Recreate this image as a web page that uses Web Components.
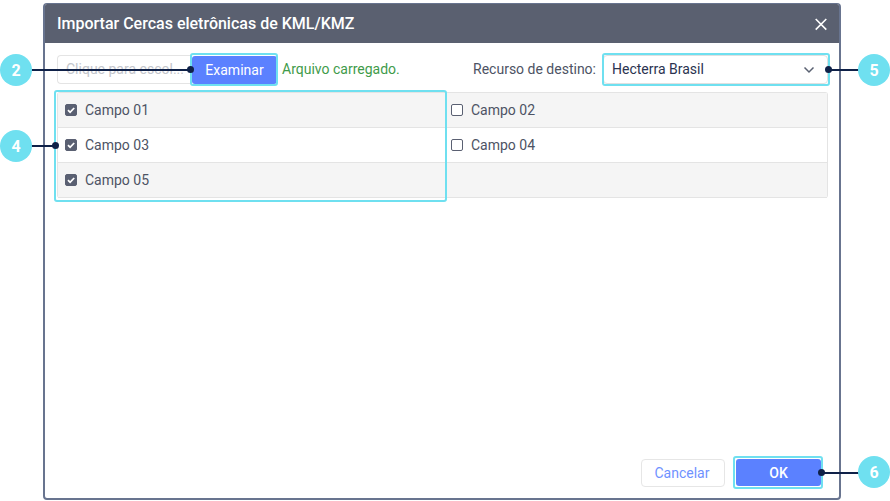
<!DOCTYPE html>
<html>
<head>
<meta charset="utf-8">
<style>
  html, body { margin: 0; background: #fff; }
  body { font-family: Roboto, "Liberation Sans", sans-serif; }
</style>
</head>
<body>
<import-dialog></import-dialog>
<script>
const ICONS = {
  close: '<svg width="14" height="14" viewBox="0 0 14 14"><path d="M1.7 2l10.6 10.6M12.3 2L1.7 12.6" stroke="#fff" stroke-width="1.6" fill="none"/></svg>',
  chevron: '<svg width="12" height="8" viewBox="0 0 12 8"><path d="M1.5 1.5L6 6l4.5-4.5" stroke="#5a6172" stroke-width="1.5" fill="none"/></svg>',
  check: '<svg width="10" height="10" viewBox="0 0 10 10"><path d="M2 5.2l2.1 2.1L8.2 3" stroke="#fff" stroke-width="1.8" fill="none"/></svg>'
};

customElements.define('check-row', class extends HTMLElement {
  constructor() {
    super();
    const on = this.hasAttribute('checked');
    this.attachShadow({ mode: 'open' }).innerHTML = `
      <style>
        :host { display: flex; align-items: center; height: 35px; padding-left: 7px; box-sizing: border-box;
                font-size: 14px; color: #4d5364; gap: 8px; }
        .box { width: 12px; height: 12px; border: 1px solid #5a6072; border-radius: 2px; background: #fff; box-sizing: border-box;
               display: flex; align-items: center; justify-content: center; }
        :host([checked]) .box { background: #5a6072; }
        svg { display: block; }
      </style>
      <span class="box">${on ? ICONS.check : ''}</span><slot></slot>`;
  }
});

customElements.define('import-dialog', class extends HTMLElement {
  constructor() {
    super();
    this.attachShadow({ mode: 'open' }).innerHTML = `
      <style>
        :host { display: block; position: relative; width: 890px; height: 501px; overflow: hidden; padding: 3px 49px 1px 43px; box-sizing: border-box; }
        .dialog { height: 100%; border: 2px solid #68748f; border-top-width: 1px; border-radius: 4px; box-sizing: border-box;
                  display: flex; flex-direction: column; background: #fff; }
        header { height: 39px; flex: none; background: #5a6070; color: #fff; font-size: 16px; font-weight: 500;
                 display: flex; align-items: center; justify-content: space-between; padding: 0 11px 0 12px; border-radius: 2px 2px 0 0; }
        header svg { display: block; }
        .tools { display: flex; align-items: flex-start; height: 29px; margin: 12px 11px 0 12px; font-size: 14px; line-height: 29px; }
        .file { width: 135px; height: 29px; border: 1px solid #e4e4e4; border-right: 0; border-radius: 4px 0 0 4px; box-sizing: border-box;
                color: #c4c6cc; padding-left: 8px; line-height: 27px; white-space: nowrap; overflow: hidden; }
        .browse { width: 85px; height: 28px; margin-top: 1px; background: #5b81ff; color: #fff; border-radius: 3px;
                  display: flex; align-items: center; justify-content: center; }
        .ok-msg { color: #3f9b4a; margin-left: 5px; }
        .dest { margin-left: auto; color: #4d5364; }
        .select { width: 225px; height: 29px; margin-left: 7px; border: 1px solid #e0e0e0; border-radius: 4px; box-sizing: border-box;
                  display: flex; align-items: center; justify-content: space-between; padding: 0 12px 0 8px; color: #2b3350; }
        .grid { display: grid; grid-template-columns: 386px 1fr; margin: 8px 11px 0 12px; border: 1px solid #e4e4e4; border-bottom: 0; border-radius: 3px; }
        .grid > * { border-bottom: 1px solid #e4e4e4; }
        .odd { background: #f5f5f5; }
        .empty { height: 35px; box-sizing: border-box; }
        footer { margin-top: auto; display: flex; justify-content: flex-end; align-items: flex-start; gap: 11px; padding: 0 18px 11px 0; font-size: 14px; }
        .cancel { width: 84px; height: 28px; padding-right: 2px; border: 1px solid #e6e6e6; border-radius: 4px; box-sizing: border-box; color: #6f92ff;
                  display: flex; align-items: center; justify-content: center; }
        .ok { width: 85px; height: 27px; background: #5b81ff; color: #fff; font-weight: 500; border-radius: 3px;
              display: flex; align-items: center; justify-content: center; }
        .hl { position: absolute; border: 2px solid #6fe0f0; border-radius: 3px; box-sizing: border-box; }
        .line { position: absolute; height: 2px; background: #0f2148; }
        .dot { position: absolute; width: 7px; height: 7px; border-radius: 50%; background: #0f2148; }
        .num { position: absolute; width: 32px; height: 32px; border-radius: 50%; background: #6fe0f0; color: #fff;
               font-size: 16px; font-weight: 700; display: flex; align-items: center; justify-content: center; }
      </style>
      <div class="dialog">
        <header><span>Importar Cercas eletrônicas de KML/KMZ</span>${ICONS.close}</header>
        <div class="tools">
          <div class="file">Clique para escol...</div>
          <div class="browse">Examinar</div>
          <span class="ok-msg">Arquivo carregado.</span>
          <span class="dest">Recurso de destino:</span>
          <div class="select"><span>Hecterra Brasil</span>${ICONS.chevron}</div>
        </div>
        <div class="grid">
          <check-row class="odd" checked>Campo 01</check-row><check-row class="odd">Campo 02</check-row>
          <check-row checked>Campo 03</check-row><check-row>Campo 04</check-row>
          <check-row class="odd" checked>Campo 05</check-row><div class="odd empty"></div>
        </div>
        <footer><div class="cancel">Cancelar</div><div class="ok">OK</div></footer>
      </div>
      <div class="hl" style="left:190px;top:53px;width:88px;height:33px"></div>
      <div class="hl" style="left:54px;top:90px;width:393px;height:112px"></div>
      <div class="hl" style="left:602px;top:53px;width:228px;height:33px"></div>
      <div class="hl" style="left:733px;top:456px;width:90px;height:33px"></div>
      <div class="line" style="left:30px;top:69px;width:160px"></div><div class="dot" style="left:187px;top:66px"></div>
      <div class="line" style="left:30px;top:145px;width:24px"></div><div class="dot" style="left:52px;top:142px"></div>
      <div class="line" style="left:830px;top:69px;width:30px"></div><div class="dot" style="left:825px;top:66px"></div>
      <div class="line" style="left:820px;top:472px;width:40px"></div><div class="dot" style="left:818px;top:469px"></div>
      <div class="num" style="left:0;top:54px">2</div>
      <div class="num" style="left:0;top:130px">4</div>
      <div class="num" style="left:858px;top:54px">5</div>
      <div class="num" style="left:858px;top:456px">6</div>`;
  }
});
</script>
</body>
</html>
